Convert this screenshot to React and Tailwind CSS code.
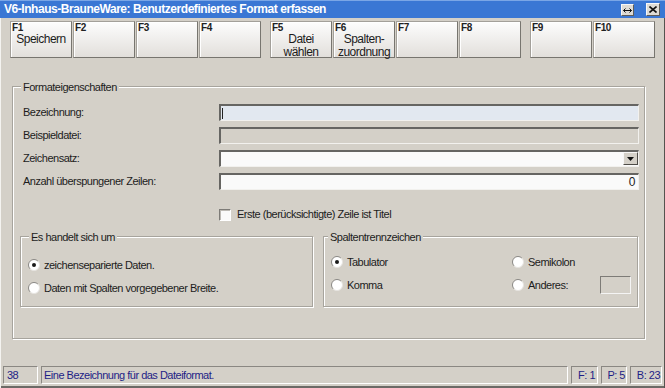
const txt = "font-['Liberation_Sans',Arial,sans-serif] text-[11px] tracking-[-0.5px] text-[#1c1c1c]";

const Radio = ({ checked }) => (
    <svg width="12" height="12" viewBox="0 0 12 12" className="shrink-0">
        <circle cx="6" cy="6" r="5.5" fill="#ffffff" />
        <path d="M2.1 9.9 A5.5 5.5 0 0 1 9.9 2.1" stroke="#8a8884" strokeWidth="1" fill="none" />
        <path d="M2.1 9.9 A5.5 5.5 0 0 0 9.9 2.1" stroke="#e6e4e0" strokeWidth="1" fill="none" />
        {checked && <circle cx="6" cy="6" r="2" fill="#1a1a1a" />}
    </svg>
);

const FKey = ({ fk, lines = [], className = "" }) => (
    <div
        className={`w-[62px] h-[37px] shrink-0 flex flex-col border border-[#a3a09a] border-r-[#77756f] border-b-[#77756f] bg-gradient-to-b from-[#fdfdfd] to-[#e2dfdb] shadow-[inset_1px_1px_0_#ffffff] ${className}`}
    >
        <span className="pl-[1px] pt-[1px] leading-[9px] font-['Liberation_Sans',Arial,sans-serif] text-[10px] font-bold tracking-[-0.4px] text-[#222]">
            {fk}
        </span>
        <div className="mt-[1px] flex flex-col items-center">
            {lines.map((l) => (
                <span key={l} className={`${txt} text-[12px] leading-[13px]`}>
                    {l}
                </span>
            ))}
        </div>
    </div>
);

const sunken =
    "border-t-2 border-l-2 border-r border-b border-t-[#666562] border-l-[#666562] border-r-[#f2f1ee] border-b-[#f2f1ee]";

const Field = ({ label, children }) => (
    <div className="flex h-[17px] items-center">
        <span className={`w-[196px] pl-[10px] box-content ${txt}`}>{label}</span>
        {children}
    </div>
);

const Group = ({ title, className = "", children, labelLeft = "left-[8px]" }) => (
    <div
        className={`relative border border-[#a7a49d] shadow-[1px_1px_0_#ffffff,inset_1px_1px_0_#ffffff] ${className}`}
    >
        <span className={`absolute -top-[8px] ${labelLeft} bg-[#d4d0c8] px-[2px] ${txt}`}>
            {title}
        </span>
        {children}
    </div>
);

const Cell = ({ className = "", children }) => (
    <div
        className={`h-[18px] flex items-center border-t border-l border-r border-b border-t-[#8a8782] border-l-[#8a8782] border-r-[#ffffff] border-b-[#ffffff] font-['Liberation_Sans',Arial,sans-serif] text-[11px] tracking-[-0.5px] text-[#1e1e86] ${className}`}
    >
        {children}
    </div>
);

export default function App() {
    return (
        <div className="w-[665px] h-[388px] bg-[#d4d0c8] flex flex-col overflow-hidden shadow-[inset_1px_0_0_#f4f3f0,inset_-1px_0_0_#55534f,inset_0_-2px_0_#6c6a66]">
            {/* title bar */}
            <div className="h-[18px] shrink-0 flex items-center bg-[#3a77d4] shadow-[inset_0_1px_0_#7aa6e6] pl-[4px] pr-[5px]">
                <span className="font-['Liberation_Sans',Arial,sans-serif] text-[12px] font-bold tracking-[-0.45px] text-white">
                    V6-Inhaus-BrauneWare: Benutzerdefiniertes Format erfassen
                </span>
                <div className="ml-auto flex items-center">
                    <div className="w-[13px] h-[12px] mt-[2px] flex items-center justify-center bg-[#dedbd5] border border-[#f8f8f8] border-r-[#5f5d59] border-b-[#5f5d59]">
                        <svg width="9" height="5" viewBox="0 0 9 5">
                            <path d="M0.5 2.5 H8.5 M2.5 0.5 L0.5 2.5 L2.5 4.5 M6.5 0.5 L8.5 2.5 L6.5 4.5" stroke="#111" strokeWidth="1" fill="none" />
                        </svg>
                    </div>
                    <div className="ml-[12px] w-[14px] h-[13px] flex items-center justify-center bg-[#dedbd5] border border-[#f8f8f8] border-r-[#5f5d59] border-b-[#5f5d59]">
                        <svg width="8" height="7" viewBox="0 0 8 7">
                            <path d="M0.5 0.5 L7.5 6.5 M7.5 0.5 L0.5 6.5" stroke="#111" strokeWidth="1.6" fill="none" />
                        </svg>
                    </div>
                </div>
            </div>

            {/* function keys */}
            <div className="mt-[3px] pl-[10px] flex gap-[1px]">
                <FKey fk="F1" lines={["Speichern"]} />
                <FKey fk="F2" />
                <FKey fk="F3" />
                <FKey fk="F4" />
                <FKey fk="F5" lines={["Datei", "wählen"]} className="ml-[8px]" />
                <FKey fk="F6" lines={["Spalten-", "zuordnung"]} />
                <FKey fk="F7" />
                <FKey fk="F8" />
                <FKey fk="F9" className="ml-[8px]" />
                <FKey fk="F10" />
            </div>

            {/* Formateigenschaften */}
            <Group title="Formateigenschaften" className="mt-[28px] ml-[12px] w-[633px] h-[253px] shrink-0">
                <div className="pt-[17px] flex flex-col gap-[6px]">
                    <Field label="Bezeichnung:">
                        <div className={`w-[420px] h-[17px] bg-[#e2e8f0] flex items-center pl-[1px] ${sunken}`}>
                            <span className="w-[1px] h-[11px] bg-[#222]" />
                        </div>
                    </Field>
                    <Field label="Beispieldatei:">
                        <div className={`w-[420px] h-[17px] bg-[#d4d0c8] ${sunken}`} />
                    </Field>
                    <Field label="Zeichensatz:">
                        <div className={`w-[420px] h-[17px] bg-[#fafafa] flex justify-end ${sunken}`}>
                            <div className="w-[15px] h-[13px] flex items-center justify-center bg-[#d4d0c8] border border-[#f6f6f6] border-r-[#4e4c48] border-b-[#4e4c48]">
                                <svg width="7" height="4" viewBox="0 0 7 4">
                                    <path d="M0 0 H7 L3.5 4 Z" fill="#111" />
                                </svg>
                            </div>
                        </div>
                    </Field>
                    <Field label="Anzahl überspungener Zeilen:">
                        <div className={`w-[420px] h-[17px] bg-[#fafafa] flex items-center justify-end pr-[3px] ${sunken}`}>
                            <span className={`${txt} text-[12px]`}>0</span>
                        </div>
                    </Field>
                </div>

                <div className="mt-[18px] ml-[206px] flex items-center h-[13px]">
                    <span className="w-[12px] h-[12px] bg-[#fafafa] border-t border-l border-r border-b border-t-[#7d7b77] border-l-[#7d7b77] border-r-[#ffffff] border-b-[#ffffff] shadow-[inset_1px_1px_0_#bdbab4]" />
                    <span className={`ml-[6px] ${txt}`}>Erste (berücksichtigte) Zeile ist Titel</span>
                </div>

                <div className="mt-[15px] ml-[7px] flex">
                    <Group title="Es handelt sich um" className="w-[293px] h-[71px]">
                        <div className="pt-[22px] pl-[7px] flex flex-col gap-[11px]">
                            <div className="flex items-center h-[12px] gap-[4px]">
                                <Radio checked />
                                <span className={txt}>zeichenseparierte Daten.</span>
                            </div>
                            <div className="flex items-center h-[12px] gap-[4px]">
                                <Radio />
                                <span className={txt}>Daten mit Spalten vorgegebener Breite.</span>
                            </div>
                        </div>
                    </Group>
                    <Group title="Spaltentrennzeichen" className="ml-[10px] w-[315px] h-[71px]" labelLeft="left-[4px]">
                        <div className="pt-[19px] pl-[7px] grid grid-cols-[181px_1fr] gap-y-[11px]">
                            <div className="flex items-center h-[12px] gap-[4px]">
                                <Radio checked />
                                <span className={txt}>Tabulator</span>
                            </div>
                            <div className="flex items-center h-[12px] gap-[4px]">
                                <Radio />
                                <span className={txt}>Semikolon</span>
                            </div>
                            <div className="flex items-center h-[12px] gap-[4px]">
                                <Radio />
                                <span className={txt}>Komma</span>
                            </div>
                            <div className="flex items-center h-[12px] gap-[4px]">
                                <Radio />
                                <span className={txt}>Anderes:</span>
                                <div className="ml-auto mr-[6px] w-[31px] h-[18px] bg-[#d4d0c8] border-t border-l border-r border-b border-t-[#7d7b77] border-l-[#7d7b77] border-r-[#f4f4f4] border-b-[#f4f4f4]" />
                            </div>
                        </div>
                    </Group>
                </div>
            </Group>

            {/* status bar */}
            <div className="mt-[27px] pl-[3px] flex gap-[3px]">
                <Cell className="w-[35px] pl-[3px]">38</Cell>
                <Cell className="w-[527px] pl-[2px]">Eine Bezeichnung für das Dateiformat.</Cell>
                <Cell className="w-[27px] justify-end pr-[2px]">F: 1</Cell>
                <Cell className="w-[26px] justify-end pr-[1px]">P: 5</Cell>
                <Cell className="w-[32px] justify-end pr-[1px]">B: 23</Cell>
            </div>
        </div>
    );
}
